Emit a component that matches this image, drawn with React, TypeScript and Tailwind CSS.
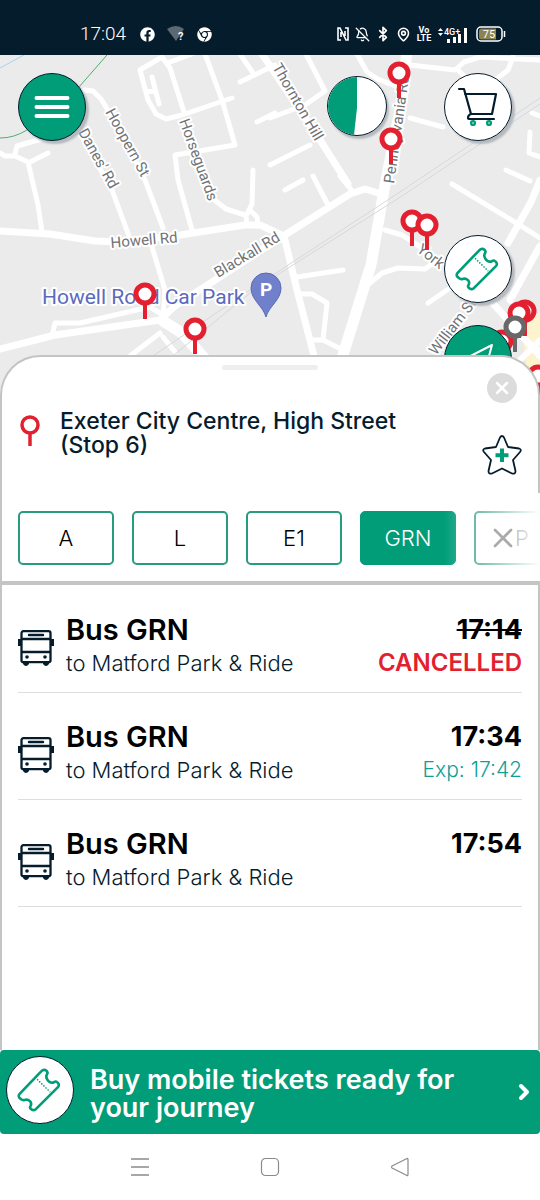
import { Bluetooth, BellOff, ChevronRight, MapPin, X } from "lucide-react";
import { FaChrome, FaFacebook } from "react-icons/fa";

const routes = ["A", "L", "E1", "GRN", "P"];

const departures = [
  { time: "17:14", status: "cancelled", note: "CANCELLED" },
  { time: "17:34", status: "expected", note: "Exp: 17:42" },
  { time: "17:54", status: "scheduled", note: "" },
];

const minorRoads = [
  "M84 90L93 91L101 99L120 130L145 180L163 228",
  "M78 130L112 190L129 236",
  "M152 247L165 290L163 318",
  "M184 112L170 68L162 57L140 70L148 100L156 114L166 119L182 115L232 98",
  "M170 62L192 54M205 54L222 100L235 145L175 155L178 180L192 230",
  "M152 77L159 104M146 92L155 91",
  "M240 54L253 73M240 82L275 65M257 122L275 113",
  "M0 153L5 156L15 156L28 162L38 205L42 232M15 154L17 146L45 138M30 162L48 153",
  "M212 198L226 209L245 215M253 170L252 204L246 216L247 225M250 210L257 217L258 225",
  "M52 336L55 323L80 323L150 307L163 315M130 356L160 333M163 337L175 352",
  "M270 165L310 145M285 190L303 180M313 176L328 205M340 176L353 192",
  "M297 277L343 270M301 294L312 294L327 303L323 340M312 340L323 340L343 350",
  "M385 230L402 235L425 250M370 283L382 273L398 268L425 269L440 258M428 303L450 288",
  "M452 184L518 224L540 238",
  "M270 118L305 105L325 91L306 54M357 54L367 72L378 79L400 88M410 118L443 127",
  "M410 65L455 70L464 62L480 57L540 60M458 70L466 78M495 80L508 70L513 57",
  "M530 132L529 153L540 157M532 113L540 116M506 170L530 181",
];

const majorRoads = [
  "M0 231L50 234L95 241L120 242L180 235L245 225L260 225L284 236L297 290L314 356",
  "M0 349L55 335L160 320L175 306L280 238L350 194L365 189L378 193",
  "M262 54L320 140L348 184",
  "M540 180L531 202L508 243M540 246L510 300M490 300L540 356",
];

const stops = [
  [399, 73],
  [391, 139],
  [412, 221],
  [427, 225],
  [145, 294],
  [195, 329],
  [525, 311],
  [519, 313],
  [502, 341],
];

const roadLabels = [
  { text: "Hoopern St", x: 105, y: 112, angle: 61 },
  { text: "Danes' Rd", x: 78, y: 132, angle: 61 },
  { text: "Horseguards", x: 179, y: 121, angle: 70 },
  { text: "Thornton Hill", x: 272, y: 67, angle: 60 },
  { text: "Howell Rd", x: 111, y: 248, angle: -5 },
  { text: "Blackall Rd", x: 218, y: 278, angle: -31 },
  { text: "Pennsylvania Rd", x: 394, y: 184, angle: -82 },
  { text: "York", x: 416, y: 251, angle: 38 },
  { text: "William St", x: 436, y: 356, angle: -52 },
];

function StopPin({ x, y, color = "#e3202f" }: { x: number; y: number; color?: string }) {
  return (
    <g stroke={color} fill="#fff">
      <path d={`M${x} ${y + 9}V${y + 25}`} strokeWidth="4" />
      <circle cx={x} cy={y} r="9" strokeWidth="5" />
    </g>
  );
}

function CityMap() {
  return (
    <svg
      viewBox="0 55 540 360"
      preserveAspectRatio="xMidYMin slice"
      className="block h-full w-full"
      fontFamily="Roboto, sans-serif"
      role="img"
      aria-label="Map of Exeter city centre"
    >
      <rect y="55" width="540" height="360" fill="#ebebeb" />
      <path d="M522 330L540 312V415H500L528 380Z" fill="#fdf3cf" />
      <g fill="none" stroke="#fff" strokeLinecap="round" strokeLinejoin="round">
        <path d={minorRoads.join("")} strokeWidth="5" />
        <path d={majorRoads.join("")} strokeWidth="7" />
        <path d="M163 321L182 333L206 360M407 50L402 100L384 190L371 265L342 358" strokeWidth="11" />
        <path d="M540 340L515 365M520 335L540 352" strokeWidth="6" />
      </g>
      <g fill="none" stroke="#d5d8dc">
        <path d="M150 358L250 290L400 192L540 98M170 358L255 289L402 196L540 104" />
      </g>
      <path d="M107 55L79 87M27 130Q14 138 0 138" fill="none" stroke="#4fae6d" />
      <path d="M0 68L24 55" stroke="#a9d2f3" fill="none" />
      <g fontSize="15" fill="#6f7377" stroke="#fff" strokeWidth="4" strokeLinejoin="round" paintOrder="stroke">
        {roadLabels.map((label) => (
          <text key={label.text} transform={`translate(${label.x} ${label.y}) rotate(${label.angle})`}>
            {label.text}
          </text>
        ))}
        <text x="42" y="304" fontSize="21" fill="#5b6abf">
          Howell Road Car Park
        </text>
      </g>
      <path
        d="M266 317C263 306 251 300 251 288A15 15 0 0 1 281 288C281 300 269 306 266 317Z"
        fill="#7080cb"
        stroke="#5969b9"
      />
      <text x="266" y="296" textAnchor="middle" fontSize="19" fontWeight="700" fill="#fff">
        P
      </text>
      {stops.map(([x, y]) => (
        <StopPin key={`${x}-${y}`} x={x} y={y} />
      ))}
      <StopPin x={515} y={327} color="#686868" />
      <StopPin x={538} y={376} />
    </svg>
  );
}

function TicketIcon() {
  return (
    <svg viewBox="0 0 68 68" className="size-full" fill="none" stroke="#009d78" aria-hidden="true">
      <path
        d="M35 15Q38 12 41 14.500Q42.500 16 41 18C39.500 21 42 26.500 46.500 26.500C48.500 26.500 49 24.500 51 25.500Q55 28 52.500 31L30 53.500Q27 56 24.500 53.500Q23 52 24.500 50C26 46.500 22.500 43.500 19 44C17 44.500 16.500 45 14.500 43.500Q10.500 41 13 38Z"
        strokeWidth="2.700"
        strokeLinejoin="round"
      />
      <path d="M31 23L44.500 36" strokeWidth="1.500" strokeDasharray="1.500 1.500" />
    </svg>
  );
}

function BusIcon() {
  return (
    <svg viewBox="0 0 36 36" className="size-9 shrink-0" fill="none" stroke="#051c2c" strokeWidth="2.300" aria-hidden="true">
      <rect x="3.500" y="1.200" width="29" height="31" rx="2" />
      <path d="M3 9H33M3 22H33" />
      <path d="M11 5H25" strokeWidth="2.500" strokeLinecap="round" />
      <path d="M1.500 9V16M34.500 9V16" strokeWidth="3" />
      <path d="M5 32H11V34Q8 38 5 34ZM25 32H31V34Q28 38 25 34Z" fill="#051c2c" stroke="none" />
      <circle cx="9" cy="27" r="1.800" fill="#051c2c" stroke="none" />
      <circle cx="27" cy="27" r="1.800" fill="#051c2c" stroke="none" />
    </svg>
  );
}

function StatusBar() {
  return (
    <header className="flex h-[55px] items-end justify-between bg-[#051c2c] pr-[34px] pb-[9px] pl-20 text-white">
      <div className="flex h-6 items-center gap-3">
        <time className="w-12 font-[Roboto] text-[19px] leading-6 font-light whitespace-nowrap">17:04</time>
        <FaFacebook size={15} />
        <svg width="18" height="16" viewBox="0 0 18 16" aria-hidden="true">
          <path d="M0 3Q9 -3 17 3L9 15Z" fill="#5c6973" />
          <text x="11" y="14" fontSize="11" fontWeight="700" fill="#fff" fontFamily="Roboto">?</text>
        </svg>
        <FaChrome size={15} />
      </div>
      <div className="flex h-6 items-center gap-[5px]">
        <svg width="14" height="14" viewBox="0 0 14 14" fill="none" stroke="#fff" strokeWidth="1.600" aria-hidden="true">
          <path d="M5 13H2V1H4L10 13H12V1H9M5 5V10M9 4V9" />
        </svg>
        <BellOff size={15} />
        <Bluetooth size={16} strokeWidth={2.5} />
        <MapPin size={15} strokeWidth={2.5} />
        <span className="w-4 text-center font-[Roboto] text-[9px] leading-[8px] font-bold">Vo LTE</span>
        <svg width="30" height="17" viewBox="0 0 30 17" fill="#fff" fontFamily="Roboto" aria-hidden="true">
          <path d="M1 5L3.500 2L6 5ZM1 7L3.500 10L6 7Z" />
          <text x="7" y="9" fontSize="9" fontWeight="500">4G+</text>
          <path d="M10 13h3v4h-3zM16 11h3v6h-3zM21 8h3v9h-3zM27 2h3v15h-3z" />
        </svg>
        <svg width="30" height="16" viewBox="0 0 30 16" className="ml-1" aria-hidden="true">
          <rect x="1" y="1" width="25" height="14" rx="4" fill="#051c2c" stroke="#fff" strokeWidth="1.500" />
          <path d="M5 2.500H20V13.500H5Q3 13.500 3 11V5Q3 2.500 5 2.500Z" fill="#8b8354" />
          <path d="M28.500 5V11" stroke="#fff" strokeWidth="1.500" />
          <text x="13" y="12" fontSize="11" textAnchor="middle" fill="#fff" fontFamily="Roboto">75</text>
        </svg>
      </div>
    </header>
  );
}

function MapControls() {
  return (
    <>
      <button
        type="button"
        aria-label="Menu"
        className="absolute top-[18px] left-[18px] grid size-[68px] place-items-center rounded-full border border-[#051c2c] bg-[#009d78] shadow-[3px_3px_2px_#b5b9be]"
      >
        <svg width="36" height="24" viewBox="0 0 36 24" stroke="#fff" strokeWidth="4" strokeLinecap="round" aria-hidden="true">
          <path d="M2.500 3H33.500M2.500 12H33.500M2.500 21H33.500" />
        </svg>
      </button>
      <button
        type="button"
        aria-label="Network status"
        className="absolute top-[21px] right-[153px] size-[60px] overflow-hidden rounded-full border border-[#051c2c] bg-white shadow-[2px_3px_2px_#b5b9be]"
      >
        <svg viewBox="0 0 58 58" className="size-full" aria-hidden="true">
          <path d="M0 0H29V31L26 58H0Z" fill="#009d78" />
        </svg>
      </button>
      <button
        type="button"
        aria-label="Basket"
        className="absolute top-[18px] right-7 size-[68px] rounded-full border border-[#051c2c] bg-white shadow-[3px_3px_2px_#b5b9be]"
      >
        <svg viewBox="0 0 66 66" className="size-full" fill="none" stroke="#051c2c" strokeWidth="2.200" strokeLinecap="round" strokeLinejoin="round" aria-hidden="true">
          <path d="M14 15H19L26 40M20 20H51L47 40H26Q23 41 23 44Q23 45 25 45H49" />
          <g fill="#9fd8c9" stroke="#009d78">
            <circle cx="28" cy="49" r="2" />
            <circle cx="44" cy="49" r="2" />
          </g>
        </svg>
      </button>
      <button
        type="button"
        aria-label="Tickets"
        className="absolute top-[180px] right-7 size-[68px] rounded-full border border-[#051c2c] bg-white shadow-[3px_3px_2px_#b5b9be]"
      >
        <TicketIcon />
      </button>
      <button
        type="button"
        aria-label="My location"
        className="absolute top-[270px] right-7 size-[68px] rounded-full border border-[#051c2c] bg-[#009d78]"
      >
        <svg viewBox="0 0 66 66" className="size-full" fill="none" stroke="#fff" strokeWidth="2" strokeLinejoin="round" aria-hidden="true">
          <path d="M47 19L14 36L29 38L38 52Z" />
        </svg>
      </button>
    </>
  );
}

function StopHeader() {
  return (
    <div className="px-4 pt-2">
      <div className="mx-auto h-[5px] w-24 rounded-full bg-[#eeeeee]" />
      <div className="flex pt-[3px]">
        <svg width="24" height="32" viewBox="0 0 24 32" className="mt-[42px] shrink-0" fill="none" stroke="#e3202f" aria-hidden="true">
          <circle cx="12" cy="10" r="8" strokeWidth="3.500" />
          <path d="M12 18V31" strokeWidth="3.500" />
        </svg>
        <h1 className="mt-9 ml-[18px] flex-1 pr-20 text-[23px] leading-6 font-medium text-[#051c2c]">
          Exeter City Centre, High Street (Stop 6)
        </h1>
        <div className="flex w-10 flex-col items-center gap-8">
          <button type="button" aria-label="Close" className="grid size-[30px] place-items-center rounded-full bg-[#dcdcdc] text-white">
            <X size={20} strokeWidth={3} />
          </button>
          <button type="button" aria-label="Add to favourites" className="size-10">
            <svg viewBox="0 0 40 40" fill="none" stroke="#051c2c" strokeWidth="1.800" strokeLinejoin="round" aria-hidden="true">
              <path d="M18 2.500Q20 -.5 22 2.500L26 12L37 13.500Q40 14.500 38 17L31 25L33.500 36Q33.500 39.500 30 38.500L20 33.500L10 38.500Q6.500 39.500 6.500 36L9 25L2 17Q0 14.500 3 13.500L14 12Z" />
              <path d="M20 13.500V27M13.500 20.250H26.500" stroke="#009d78" strokeWidth="4" />
            </svg>
          </button>
        </div>
      </div>
    </div>
  );
}

function RouteFilter() {
  return (
    <div className="relative mt-9 pb-4">
      <div className="flex gap-[18px] overflow-hidden pl-4">
        {routes.map((route) => (
          <button
            key={route}
            type="button"
            aria-pressed={route === "GRN"}
            className={
              route === "GRN"
                ? "h-[54px] w-24 shrink-0 rounded-[5px] border border-[#009d78] bg-[#009d78] text-[22px] font-light text-white"
                : "h-[54px] w-24 shrink-0 rounded-[5px] border-2 border-[#289a7e] bg-white text-[22px] font-light text-black"
            }
          >
            {route}
          </button>
        ))}
      </div>
      <div className="pointer-events-none absolute -top-[18px] -right-[2px] h-[88px] w-[96px] bg-linear-to-r from-transparent to-white" />
      <button type="button" aria-label="Clear filter" className="absolute top-[11px] right-[19px] text-[#ababab]">
        <X size={32} strokeWidth={2} />
      </button>
    </div>
  );
}

function Departures() {
  return (
    <ul className="px-4">
      {departures.map((departure) => (
        <li key={departure.time} className="flex border-b border-[#dedede] pt-7 pb-[14px] first:pt-[29px]">
          <div className="mt-4">
            <BusIcon />
          </div>
          <div className="ml-3 flex-1">
            <h2 className="text-[29px] leading-8 font-semibold text-black">Bus GRN</h2>
            <p className="mt-[2px] text-[22px] leading-[30px] font-light text-[#051c2c]">to Matford Park &amp; Ride</p>
          </div>
          <div className="text-right">
            <time
              className={
                departure.status === "cancelled"
                  ? "block text-[27px] leading-8 font-bold text-black line-through decoration-2"
                  : "block text-[27px] leading-8 font-bold text-black"
              }
            >
              {departure.time}
            </time>
            {departure.note && (
              <p
                className={
                  departure.status === "cancelled"
                    ? "mt-[2px] text-2xl leading-[30px] font-semibold text-[#e3202f]"
                    : "mt-[2px] text-[21px] leading-[30px] font-light text-[#0f9f95]"
                }
              >
                {departure.note}
              </p>
            )}
          </div>
        </li>
      ))}
    </ul>
  );
}

export default function App() {
  return (
    <div className="flex min-h-screen flex-col bg-white font-[Inter,sans-serif]">
      <StatusBar />
      <section className="relative h-[360px] overflow-hidden">
        <CityMap />
        <MapControls />
      </section>

      <main className="relative -mt-[60px] flex flex-1 flex-col rounded-t-[40px] border-2 border-b-0 border-[#c4c4c4] bg-white">
        <StopHeader />
        <RouteFilter />
        <div className="h-1 bg-[#c4c4c4]" />
        <Departures />
      </main>

      <a href="#tickets" className="flex h-[84px] items-center rounded bg-[#009d78] pr-1 pl-1.5 text-white">
        <span className="mb-1 size-[68px] shrink-0 rounded-full border border-[#051c2c] bg-white">
          <TicketIcon />
        </span>
        <span className="mt-1 ml-4 max-w-[400px] flex-1 text-[27px] leading-7 font-semibold">
          Buy mobile tickets ready for your journey
        </span>
        <ChevronRight size={24} strokeWidth={4} className="ml-auto shrink-0" />
      </a>

      <nav className="flex h-[66px] items-center justify-center gap-[110px] text-[#8a8a8a]">
        <button type="button" aria-label="Recent apps">
          <svg width="20" height="20" viewBox="0 0 20 20" fill="none" stroke="currentColor" strokeWidth="1.500">
            <path d="M1 2H19M1 10H19M1 18H19" />
          </svg>
        </button>
        <button type="button" aria-label="Home">
          <svg width="20" height="20" viewBox="0 0 20 20" fill="none" stroke="currentColor" strokeWidth="1.200">
            <rect x="1.500" y="1.500" width="17" height="17" rx="4" />
          </svg>
        </button>
        <button type="button" aria-label="Back">
          <svg width="20" height="20" viewBox="0 0 20 20" fill="none" stroke="currentColor" strokeWidth="1.200" strokeLinejoin="round">
            <path d="M17 1.500Q18 1 18 3V17Q18 19 17 18.500L2 11Q1 10 2 9Z" />
          </svg>
        </button>
      </nav>
    </div>
  );
}
